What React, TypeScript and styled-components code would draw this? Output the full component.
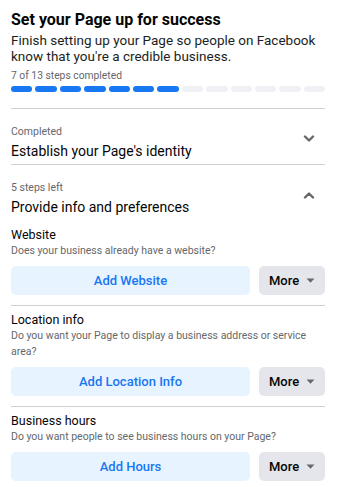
import { FC } from 'react'
import styled, { createGlobalStyle } from 'styled-components'

const colors = {
  text: '#050505',
  secondary: '#65676b',
  blue: '#1877f2',
  blueTint: '#e7f3ff',
  gray: '#e4e6eb',
  track: '#eff1f4',
  divider: '#ced0d4',
}

const GlobalStyle = createGlobalStyle`
  * { box-sizing: border-box; }
  body {
    margin: 0;
    background: #fff;
    font-family: Roboto, 'Noto Sans', Arial, sans-serif;
    color: ${colors.text};
  }
`

const Panel = styled.div`
  width: 338px;
  padding: 9px 13px 0 11px;
`

const Title = styled.h2`
  margin: 0;
  font-size: 16px;
  line-height: 22px;
  font-weight: 700;
`

const Subtitle = styled.p`
  margin: 1px 0 0;
  font-size: 13.5px;
  line-height: 16px;
  color: #1c1e21;
`

const ProgressLabel = styled.div`
  margin-top: 5px;
  font-size: 10.3px;
  line-height: 14px;
  color: ${colors.secondary};
`

const Progress = styled.div`
  display: flex;
  gap: 3px;
  margin-top: 3px;
`

const Segment = styled.div<{ $done: boolean }>`
  flex: 1;
  height: 6px;
  border-radius: 3px;
  background: ${(p) => (p.$done ? colors.blue : colors.track)};
`

const Divider = styled.hr<{ $gap?: number }>`
  margin: ${(p) => p.$gap ?? 0}px 0 0;
  border: none;
  border-top: 1px solid ${colors.divider};
`

const GroupHeader = styled.div<{ $first?: boolean }>`
  display: flex;
  align-items: center;
  justify-content: space-between;
  padding: ${(p) => (p.$first ? '16px 0 3px' : '16px 0 0')};
`

const GroupText = styled.div`
  display: flex;
  flex-direction: column;
  gap: 2px;
`

const GroupLabel = styled.span`
  font-size: 10.5px;
  line-height: 14px;
  color: ${colors.secondary};
`

const GroupTitle = styled.span`
  font-size: 14px;
  line-height: 20px;
`

const Chevron = styled.svg`
  margin: 0 10px 8px 0;
  flex-shrink: 0;
`

const Task = styled.div<{ $first?: boolean }>`
  padding: ${(p) => (p.$first ? '10px 0 10px' : '6px 0 10px')};
`

const TaskTitle = styled.div`
  font-size: 12.5px;
  line-height: 16px;
`

const TaskDesc = styled.div`
  font-size: 10.5px;
  line-height: 16px;
  color: ${colors.secondary};
`

const Actions = styled.div`
  display: grid;
  grid-template-columns: 1fr 66px;
  gap: 9px;
  margin-top: 7px;
`

const Button = styled.button<{ $primary?: boolean }>`
  display: flex;
  align-items: center;
  justify-content: center;
  gap: 7px;
  height: 29px;
  border: none;
  border-radius: 5px;
  font-family: inherit;
  font-size: 13px;
  font-weight: 500;
  background: ${(p) => (p.$primary ? colors.blueTint : colors.gray)};
  color: ${(p) => (p.$primary ? colors.blue : colors.text)};
  cursor: pointer;
`

const ChevronIcon: FC<{ up?: boolean }> = ({ up }) => (
  <Chevron width="12" height="8" viewBox="0 0 12 8">
    <polyline
      points={up ? '2,6.5 6,2.5 10,6.5' : '2,1.5 6,5.5 10,1.5'}
      fill="none"
      stroke={colors.secondary}
      strokeWidth="2.4"
      strokeLinecap="round"
      strokeLinejoin="round"
    />
  </Chevron>
)

const Caret = () => (
  <svg width="9" height="5" viewBox="0 0 9 5">
    <path d="M0.5 0.5h8L4.5 4.8z" fill={colors.secondary} strokeLinejoin="round" />
  </svg>
)

const tasks = [
  { title: 'Website', desc: 'Does your business already have a website?', action: 'Add Website' },
  {
    title: 'Location info',
    desc: 'Do you want your Page to display a business address or service area?',
    action: 'Add Location Info',
  },
  {
    title: 'Business hours',
    desc: 'Do you want people to see business hours on your Page?',
    action: 'Add Hours',
  },
]

export default function App() {
  return (
    <>
      <GlobalStyle />
      <Panel>
        <Title>Set your Page up for success</Title>
        <Subtitle>
          Finish setting up your Page so people on Facebook know that you're a credible business.
        </Subtitle>
        <ProgressLabel>7 of 13 steps completed</ProgressLabel>
        <Progress>
          {Array.from({ length: 13 }, (_, i) => (
            <Segment key={i} $done={i < 7} />
          ))}
        </Progress>
        <Divider $gap={16} />
        <GroupHeader $first>
          <GroupText>
            <GroupLabel>Completed</GroupLabel>
            <GroupTitle>Establish your Page's identity</GroupTitle>
          </GroupText>
          <ChevronIcon />
        </GroupHeader>
        <Divider />
        <GroupHeader>
          <GroupText>
            <GroupLabel>5 steps left</GroupLabel>
            <GroupTitle>Provide info and preferences</GroupTitle>
          </GroupText>
          <ChevronIcon up />
        </GroupHeader>
        {tasks.map((t, i) => (
          <div key={t.title}>
            {i > 0 && <Divider />}
            <Task $first={i === 0}>
              <TaskTitle>{t.title}</TaskTitle>
              <TaskDesc>{t.desc}</TaskDesc>
              <Actions>
                <Button $primary>{t.action}</Button>
                <Button>
                  More <Caret />
                </Button>
              </Actions>
            </Task>
          </div>
        ))}
      </Panel>
    </>
  )
}
